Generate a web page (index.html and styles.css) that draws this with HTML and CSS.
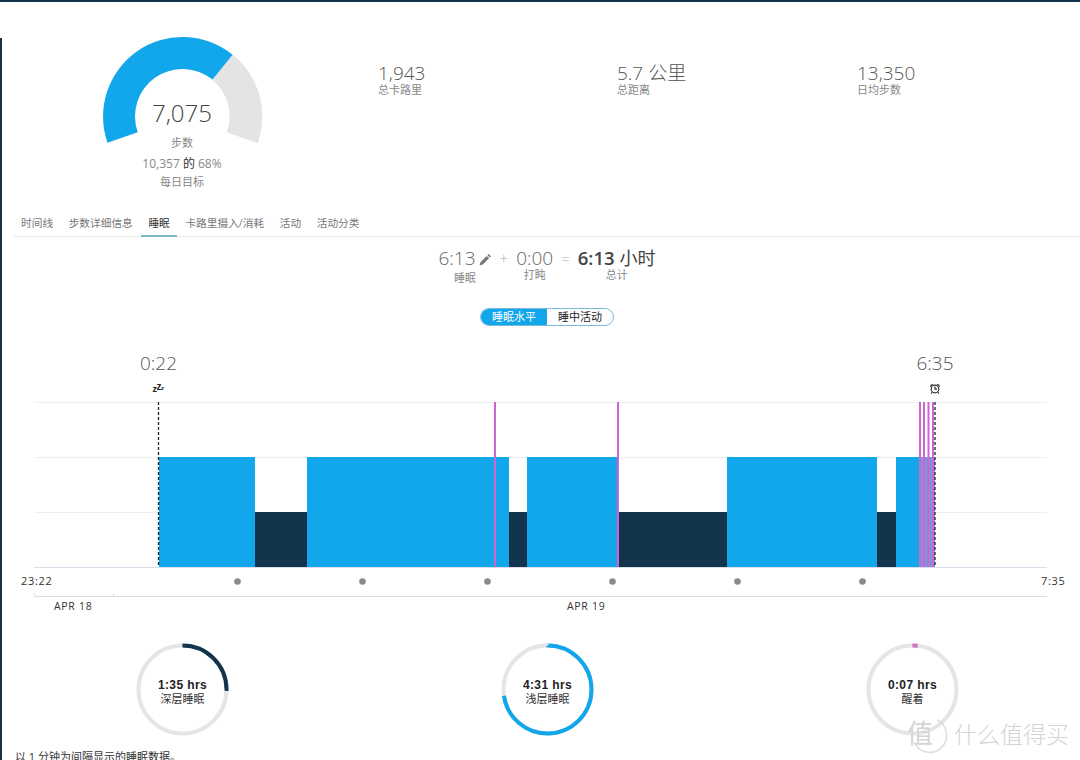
FILE: index.html
```html
<!DOCTYPE html>
<html lang="zh">
<head>
<meta charset="utf-8">
<title>睡眠</title>
<link rel="stylesheet" href="styles.css">
</head>
<body>
<div class="page">
  <div class="edge"></div>

  <section class="summary">
    <div class="gauge">
      <svg class="gauge-art" width="160" height="110" viewBox="102 36 160 110">
        <path class="g-rest" d="M232.6 54.8 A79.5 79.5 0 0 1 257.5 142.8 L227.3 132.2 A47.5 47.5 0 0 0 212.5 79.6 Z"/>
        <path class="g-done" d="M107.5 142.8 A79.5 79.5 0 0 1 232.6 54.8 L212.5 79.6 A47.5 47.5 0 0 0 137.7 132.2 Z"/>
      </svg>
      <div class="gauge-text">
        <div class="gauge-num">7,075</div>
        <div class="gauge-unit">步数</div>
        <div class="gauge-goal">10,357 <span class="dark">的</span> 68%</div>
        <div class="gauge-unit">每日目标</div>
      </div>
    </div>
    <div class="stat"><div class="stat-num">1,943</div><div class="stat-label">总卡路里</div></div>
    <div class="stat"><div class="stat-num">5.7 公里</div><div class="stat-label">总距离</div></div>
    <div class="stat"><div class="stat-num">13,350</div><div class="stat-label">日均步数</div></div>
  </section>

  <nav class="tabs">
    <a class="tab">时间线</a>
    <a class="tab">步数详细信息</a>
    <a class="tab active">睡眠</a>
    <a class="tab">卡路里摄入/消耗</a>
    <a class="tab">活动</a>
    <a class="tab">活动分类</a>
  </nav>

  <section class="totals">
    <div class="total sleep">
      <div class="total-num">6:13<svg class="pencil" width="13" height="13" viewBox="0 0 13 13"><path d="M9.6 1 L12 3.4 L10.8 4.6 L8.4 2.2 Z M7.7 2.9 L10.1 5.3 L3.8 11.6 L0.6 12.4 L1.4 9.2 Z"/></svg></div>
      <div class="total-label">睡眠</div>
    </div>
    <div class="op">+</div>
    <div class="total">
      <div class="total-num">0:00</div>
      <div class="total-label">打盹</div>
    </div>
    <div class="op">=</div>
    <div class="total">
      <div class="total-num"><b class="strong">6:13</b>&nbsp;<span class="unit">小时</span></div>
      <div class="total-label">总计</div>
    </div>
  </section>

  <div class="toggle">
    <span class="toggle-item on">睡眠水平</span>
    <span class="toggle-item">睡中活动</span>
  </div>

  <svg class="chart" width="1080" height="274" viewBox="0 342 1080 274">
    <text class="c-time" x="158.5" y="370">0:22</text>
    <text class="c-time" x="935" y="370">6:35</text>
    <text class="zz z1" x="152.5" y="392">z</text>
    <text class="zz z2" x="156.5" y="390">z</text>
    <text class="zz z3" x="161" y="390">z</text>

    <g class="alarm">
      <circle cx="935" cy="389" r="3.800"/>
      <path d="M935 386.500 V389.200 H937 M932.200 392.300 L931.200 393.500 M937.800 392.300 L938.800 393.500"/>
      <path class="alarm-bell" d="M930.300 387.300 A2.300 2.300 0 0 1 933.300 384.300 Z M939.700 387.300 A2.300 2.300 0 0 0 936.700 384.300 Z"/>
    </g>

    <path class="grid" d="M34 402.500 H1047 M34 457.500 H1047 M34 512.500 H1047"/>
    <path class="base" d="M34 567.500 H1047"/>

    <rect class="light" x="159" y="457" width="96" height="110"/>
    <rect class="deep" x="255" y="512" width="52" height="55"/>
    <rect class="light" x="307" y="457" width="202" height="110"/>
    <rect class="deep" x="509" y="512" width="18" height="55"/>
    <rect class="light" x="527" y="457" width="91" height="110"/>
    <rect class="deep" x="618" y="512" width="109" height="55"/>
    <rect class="light" x="727" y="457" width="150" height="110"/>
    <rect class="deep" x="877" y="512" width="19" height="55"/>
    <rect class="light" x="896" y="457" width="39" height="110"/>
    <rect class="awake-wash" x="919" y="457" width="16" height="110"/>

    <path class="awake" d="M495 402 V567 M618 402 V567 M920 402 V567 M924 402 V567 M928.500 402 V567 M933 402 V567"/>
    <path class="marker" d="M158.500 402 V567 M935 402 V567"/>

    <text class="c-axis" x="21" y="585">23:22</text>
    <text class="c-axis" x="1041" y="585">7:35</text>
    <g class="dots">
      <circle cx="237.500" cy="581.500" r="3.300"/>
      <circle cx="362.500" cy="581.500" r="3.300"/>
      <circle cx="487.500" cy="581.500" r="3.300"/>
      <circle cx="612.500" cy="581.500" r="3.300"/>
      <circle cx="737.500" cy="581.500" r="3.300"/>
      <circle cx="862.500" cy="581.500" r="3.300"/>
    </g>
    <path class="date-axis" d="M34.500 593 V596.500 H1047 M113.500 593 V596.500"/>
    <text class="c-date" x="54" y="610">APR 18</text>
    <text class="c-date" x="567" y="610">APR 19</text>
  </svg>

  <section class="rings">
    <div class="ring">
      <svg class="ring-art" width="100" height="100" viewBox="0 0 100 100">
        <circle class="r-track" cx="49.500" cy="49.500" r="44"/>
        <circle class="r-val r-deep" cx="49.500" cy="49.500" r="44" pathLength="100" stroke-dasharray="25.500 74.500"/>
      </svg>
      <div class="ring-text"><b>1:35 hrs</b><span>深层睡眠</span></div>
    </div>
    <div class="ring">
      <svg class="ring-art" width="100" height="100" viewBox="0 0 100 100">
        <circle class="r-track" cx="49.500" cy="49.500" r="44"/>
        <circle class="r-val r-light" cx="49.500" cy="49.500" r="44" pathLength="100" stroke-dasharray="72.700 27.300"/>
      </svg>
      <div class="ring-text"><b>4:31 hrs</b><span>浅层睡眠</span></div>
    </div>
    <div class="ring">
      <svg class="ring-art" width="100" height="100" viewBox="0 0 100 100">
        <circle class="r-track" cx="49.500" cy="49.500" r="44"/>
        <circle class="r-val r-awake" cx="49.500" cy="49.500" r="44" pathLength="100" stroke-dasharray="1.900 98.100"/>
      </svg>
      <div class="ring-text"><b>0:07 hrs</b><span>醒着</span></div>
    </div>
  </section>

  <p class="note">以 1 分钟为间隔显示的睡眠数据。</p>

  <div class="watermark">
    <svg class="wm-logo" width="40" height="40" viewBox="0 0 40 40"><path d="M27 5 A17 17 0 1 1 4 27"/></svg>
    <span class="wm-char">值</span>
    <span class="wm-text">什么值得买</span>
  </div>
</div>
</body>
</html>
```
FILE: styles.css
```css
* { box-sizing: border-box; }
html, body { margin: 0; padding: 0; background: #fff; }
body { font-family: "Open Sans", "Noto Sans CJK SC", sans-serif; color: #555; }

.page {
  width: 1080px;
  height: 760px;
  overflow: hidden;
  position: relative;
  background: #fff;
  border-top: 2px solid #12344d;
}
.edge {
  position: absolute;
  left: 0;
  top: 36px;
  bottom: 0;
  width: 2px;
  background: #12344d;
}

/* summary */
.summary {
  display: grid;
  grid-template-columns: 378px 239px 240px 1fr;
  height: 210px;
}
.gauge {
  display: grid;
  justify-items: center;
  width: 364px;
  padding-top: 34px;
}
.gauge-art, .gauge-text { grid-area: 1 / 1; }
.gauge-art { display: block; }
.g-done { fill: #12a6ea; }
.g-rest { fill: #e4e4e4; stroke: #dcdcdc; stroke-width: 0.5; }
.gauge-text { text-align: center; padding-top: 60px; font-size: 11px; color: #888; }
.gauge-num { font-size: 24px; font-weight: 300; line-height: 34px; color: #444; }
.gauge-unit { line-height: 18px; margin-top: 4px; }
.gauge-goal { font-size: 12px; line-height: 18px; margin-top: 3px; color: #888; }
.gauge-goal + .gauge-unit { margin-top: 0; }
.dark { color: #333; }

.stat { padding-top: 60px; }
.stat-num { font-size: 19px; font-weight: 300; line-height: 22px; color: #555; }
.stat-label { font-size: 11px; line-height: 12px; color: #888; }

/* tabs */
.tabs {
  display: flex;
  gap: 1.600px;
  margin-left: 14px;
  height: 25px;
  border-bottom: 1px solid #e6e6e6;
  font-size: 10.700px;
}
.tab {
  padding: 0 7px;
  line-height: 23px;
  color: #777;
  height: 25px;
}
.active { color: #333; border-bottom: 2px solid #7db9ca; }

/* totals */
.totals {
  display: flex;
  justify-content: center;
  margin-left: 14px;
  gap: 8px;
  height: 71px;
  padding-top: 10px;
}
.total { text-align: center; }
.total-num { font-size: 19px; font-weight: 300; line-height: 22px; color: #666; white-space: nowrap; display: flex; align-items: center; }
.strong { font-weight: 600; color: #444; font-size: 18.500px; }
.unit { font-weight: 400; color: #444; font-size: 18px; }
.total-label { font-size: 11px; line-height: 12px; color: #888; }
.sleep .total-label { margin-top: 3px; }
.op { font-size: 15px; font-weight: 300; line-height: 22px; color: #aaa; }
.pencil { fill: #777; margin-left: 3px; margin-top: 3px; }

/* toggle */
.toggle {
  display: flex;
  width: 134px;
  height: 18px;
  margin-left: 480px;
  border: 1px solid #7cb9da;
  border-radius: 9px;
  overflow: hidden;
  font-size: 11px;
  line-height: 16px;
}
.toggle-item { width: 50%; text-align: center; color: #222; }
.on { background: #12a6ea; color: #fff; }

/* chart */
.chart { display: block; margin-top: 16px; }
.c-time { font-size: 19px; font-weight: 300; fill: #555; text-anchor: middle; }
.zz { font-family: "Liberation Sans", sans-serif; font-weight: 700; fill: #222; }
.z1 { font-size: 9px; }
.z2 { font-size: 10px; }
.z3 { font-size: 6px; }
.alarm { fill: none; stroke: #333; stroke-width: 1.200; }
.alarm-bell { fill: #333; stroke: none; }
.grid { fill: none; stroke: #eee; stroke-width: 1; }
.base { fill: none; stroke: #dcdcea; stroke-width: 1; }
.light { fill: #12a6ea; }
.deep { fill: #12344d; }
.awake-wash { fill: #7a94e0; }
.awake { fill: none; stroke: #cf66cf; stroke-width: 2; }
.marker { fill: none; stroke: #222; stroke-width: 1.300; stroke-dasharray: 3 2; }
.c-axis { font-size: 11px; fill: #333; letter-spacing: 0.700px; }
.dots { fill: #8a8a8a; }
.date-axis { fill: none; stroke: #ddd; stroke-width: 1; }
.c-date { font-size: 10.500px; fill: #333; letter-spacing: 0.700px; }

/* rings */
.rings {
  display: grid;
  grid-template-columns: repeat(3, 365px);
  margin-top: 24px;
}
.ring { display: grid; justify-items: center; align-items: center; }
.ring-art, .ring-text { grid-area: 1 / 1; }
.ring-art { display: block; }
.r-track { fill: none; stroke: #e5e5e5; stroke-width: 4; }
.r-val { fill: none; stroke-width: 4; transform: rotate(-90deg); transform-origin: 49.500px 49.500px; }
.r-deep { stroke: #12344d; }
.r-light { stroke: #12a6ea; }
.r-awake { stroke: #d070c8; }
.ring-text { display: flex; flex-direction: column; align-items: center; color: #222; padding-top: 4px; }
.ring-text b { font-family: "Liberation Sans", sans-serif; font-size: 12px; line-height: 14px; letter-spacing: 0.400px; }
.ring-text span { font-size: 11px; line-height: 14px; color: #333; }

.note { margin: 10px 0 0 15px; font-size: 11px; line-height: 14px; color: #333; }

/* watermark */
.watermark {
  position: absolute;
  left: 905px;
  top: 710px;
  width: 175px;
  height: 48px;
  color: #cfcfcf;
  display: flex;
}
.wm-logo { position: absolute; left: 5px; top: 3px; fill: none; stroke: #ddd; stroke-width: 1.500; }
.wm-char { position: absolute; left: 2px; top: 3px; font-size: 26px; line-height: 36px; color: #d4d4d4; text-shadow: 0 0 1px #fff; }
.wm-text { position: absolute; left: 49px; top: 6px; font-size: 23px; line-height: 32px; letter-spacing: 0; color: #d4d4d4; white-space: nowrap; font-weight: 300; }
```
